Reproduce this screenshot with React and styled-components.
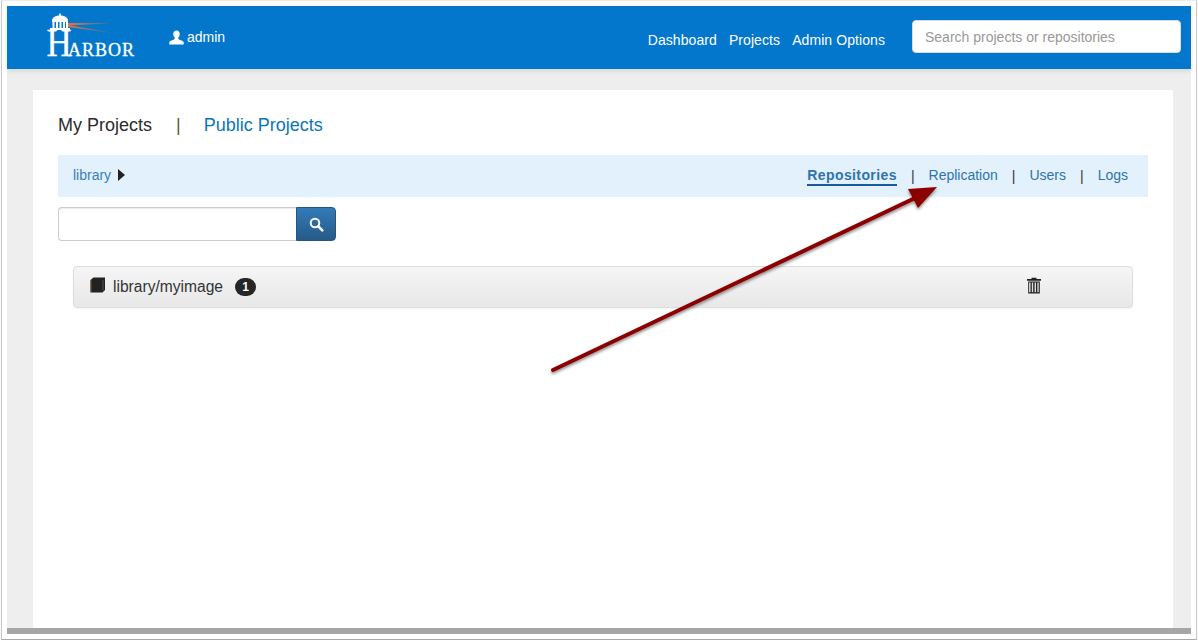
import React from "react"
import styled, { createGlobalStyle } from "styled-components"

const GlobalStyle = createGlobalStyle`
    html, body {
        margin: 0;
        padding: 0;
        background: #fff;
    }

    body {
        font-family: "Liberation Sans", Arial, sans-serif;
        font-size: 14px;
        overflow: hidden;
    }
`

const Frame = styled.div`
    box-sizing: border-box;
    position: relative;
    width: 1196px;
    height: 640px;
    margin-left: 1px;
    padding: 5px 5px 5px 5px;
    background: #fff;
    border: 1px solid #c9c9c9;
    border-top-color: #ececec;
    border-bottom-color: #a9a9a9;
    box-shadow: 0 1px 1px rgba(0, 0, 0, 0.15);
    display: flex;
    flex-direction: column;
`

const Header = styled.header`
    flex: 0 0 63px;
    display: flex;
    align-items: center;
    background: #0277cc;
    box-shadow: 0 2px 5px rgba(0, 0, 0, 0.1);
    position: relative;
    padding-right: 10px;
`

const LogoMark = styled.svg`
    display: block;
    width: 95px;
    height: 52px;
    margin-left: 38px;
    margin-top: 3px;
`

const UserName = styled.div`
    display: flex;
    align-items: center;
    gap: 3px;
    margin-left: 29px;
    margin-bottom: 1px;
    color: #fff;
    font-size: 14px;
`

const Nav = styled.nav`
    display: flex;
    gap: 12px;
    margin-left: auto;
    margin-right: 27px;
    padding-top: 5px;
`

const NavLink = styled.a`
    color: #fff;
    font-size: 14px;
    line-height: 20px;
    letter-spacing: 0.08px;
    text-decoration: none;
`

const GlobalSearch = styled.input`
    box-sizing: border-box;
    width: 269px;
    height: 33px;
    margin-top: -2px;
    padding: 0 12px;
    border: 1px solid #d5dde3;
    border-radius: 4px;
    background: #fff;
    font-family: inherit;
    font-size: 14px;

    &::placeholder {
        color: #999;
        opacity: 1;
    }
`

const Main = styled.main`
    flex: 1;
    min-height: 0;
    display: flex;
    padding: 21px 18px 0 26px;
    background: #eee;
`

const Card = styled.section`
    box-sizing: border-box;
    width: 1140px;
    padding: 0 25px;
    background: #fff;
`

const ProjectTabs = styled.div`
    display: flex;
    align-items: center;
    height: 59px;
    padding-top: 6px;
    font-size: 18px;
`

const ProjectTab = styled.a`
    color: ${props => (props.$active ? "#2b2b2b" : "#0b76b5")};
    text-decoration: none;
`

const TabDivider = styled.span`
    margin: 0 23px 0 24px;
    color: #4d5a4d;
`

const SubBar = styled.div`
    display: flex;
    align-items: center;
    justify-content: space-between;
    height: 42px;
    padding: 0 20px 0 15px;
    background: #e3f1fd;
`

const Crumb = styled.div`
    display: flex;
    align-items: center;
    gap: 7px;
    margin-bottom: 2px;
    color: #3d7fb8;
    font-size: 14px;
`

const Caret = styled.span`
    width: 0;
    height: 0;
    border-left: 7px solid #222;
    border-top: 6px solid transparent;
    border-bottom: 6px solid transparent;
`

const SubTabs = styled.div`
    display: flex;
    align-items: center;
`

const SubTab = styled.a`
    color: #2f73ad;
    font-size: 14px;
    line-height: 18px;
    text-decoration: none;
    font-weight: ${props => (props.$active ? "bold" : "normal")};
    border-bottom: 2px solid ${props => (props.$active ? "#1a5a9e" : "transparent")};
    letter-spacing: ${props => (props.$active ? "0.4px" : "0")};
`

const SubDivider = styled.span`
    margin: 0 14px;
    color: #333;
    font-size: 14px;
    line-height: 16px;
`

const SearchRow = styled.div`
    display: flex;
    margin-top: 10px;
    width: 278px;
    height: 34px;
`

const SearchField = styled.input`
    box-sizing: border-box;
    flex: 1;
    min-width: 0;
    border: 1px solid #ccc;
    border-right: 0;
    border-radius: 4px 0 0 4px;
    background: #fff;
    box-shadow: inset 0 1px 1px rgba(0, 0, 0, 0.075);
`

const SearchButton = styled.button`
    flex: 0 0 40px;
    display: flex;
    align-items: center;
    justify-content: center;
    padding: 0;
    border: 1px solid #245580;
    border-radius: 0 4px 4px 0;
    background: linear-gradient(to bottom, #337ab7, #265a88);
`

const RepoRow = styled.div`
    box-sizing: border-box;
    display: flex;
    align-items: center;
    height: 42px;
    margin: 25px 15px 0;
    padding: 0 90px 0 16px;
    border: 1px solid #ddd;
    border-radius: 4px;
    background: linear-gradient(to bottom, #f5f5f5, #e8e8e8);
    box-shadow: 0 1px 2px rgba(0, 0, 0, 0.05);
`

const RepoName = styled.span`
    margin-left: 8px;
    color: #333;
    font-size: 15.6px;
`

const Badge = styled.span`
    box-sizing: border-box;
    width: 21px;
    height: 18px;
    margin-left: 12px;
    border-radius: 10px;
    background: #262626;
    color: #fff;
    font-size: 12px;
    font-weight: bold;
    line-height: 18px;
    text-align: center;
`

const BookWrap = styled.span`
    display: flex;
    margin-bottom: 4px;
`

const TrashButton = styled.span`
    display: flex;
    margin-left: auto;
    margin-bottom: 4px;
`

const BottomBar = styled.div`
    flex: 0 0 6px;
    background: #a6a6a6;
`

const ArrowOverlay = styled.svg`
    position: absolute;
    left: -2px;
    top: -1px;
    width: 1198px;
    height: 642px;
    pointer-events: none;
`

const Logo = () => (
    <LogoMark viewBox="45 13 95 52">
        <defs>
            <linearGradient id="beam" x1="0" y1="0" x2="1" y2="0">
                <stop offset="0" stopColor="#e8743a" />
                <stop offset="1" stopColor="#e8743a" stopOpacity="0" />
            </linearGradient>
        </defs>
        <polygon points="68,23 120,23 68,25.5" fill="url(#beam)" />
        <polygon points="68,25 120,34 68,27" fill="url(#beam)" />
        <path d="M52 21 C52 17 56 15.5 60 15.5 C64 15.5 68 17 68 21 Z" fill="#fff" />
        <rect x="59.2" y="13.5" width="1.6" height="3" fill="#fff" />
        <path d="M52 21h16v1H52z" fill="#fff" />
        <path d="M52.500 22h2v6h-2zM56 22h2v6h-2zM59.500 22h2v6h-2zM63 22h2v6h-2zM66 22h2v6h-2z" fill="#fff" />
        <path d="M50 28h20v2H50z" fill="#fff" />
        <text
            transform="translate(46.500 55.500) scale(0.85 1)"
            fontFamily="'Liberation Serif', serif"
            fontSize="41"
            fill="#fff"
            stroke="#fff"
            strokeWidth="0.3"
        >
            H
        </text>
        <text
            x="68"
            y="55.500"
            fontFamily="'Liberation Serif', serif"
            fontSize="18"
            letterSpacing="1"
            fill="#fff"
            stroke="#fff"
            strokeWidth="0.3"
        >
            ARBOR
        </text>
    </LogoMark>
)

const UserIcon = () => (
    <svg width="15" height="15" viewBox="0 0 15 15">
        <path
            d="M7.500 0.500C5.500 0.500 4.300 2 4.300 4C4.300 5.700 5 7 5.800 7.800C5.900 8.700 5.600 9.300 4.500 9.800C2.800 10.500 0.500 11 0.300 12.500V14.500H14.700V12.500C14.500 11 12.200 10.500 10.500 9.800C9.400 9.300 9.100 8.700 9.200 7.800C10 7 10.700 5.700 10.700 4C10.700 2 9.500 0.500 7.500 0.500Z"
            fill="#fff"
        />
    </svg>
)

const SearchIcon = () => (
    <svg width="15" height="15" viewBox="0 0 15 15" fill="none">
        <circle cx="6" cy="6" r="4.300" stroke="#fff" strokeWidth="2" />
        <path d="M9.300 9.300L13.300 13.300" stroke="#fff" strokeWidth="2.600" strokeLinecap="round" />
    </svg>
)

const BookIcon = () => (
    <svg width="15" height="16" viewBox="0 0 15 16">
        <path d="M0.500 3L3.500 0.500H15V13L12.500 15.500H0.500Z" fill="#222" />
        <path d="M12.500 3H15V2.500L13.500 3.500V13L12.500 14Z" fill="#555" />
        <path d="M1 3.500V15" stroke="#7a5a38" strokeWidth="1" />
    </svg>
)

const TrashIcon = () => (
    <svg width="16" height="17" viewBox="0 0 16 17">
        <path d="M5.500 2V0.700H10.500V2H15V3.800H1V2Z" fill="#222" />
        <path d="M2.200 4.500H13.800V16.500H2.200Z" fill="#222" />
        <path d="M3.800 5.500V15.200" stroke="#dfe6ea" strokeWidth="1.400" />
        <path d="M6.500 5.500V15.200" stroke="#e0dcc8" strokeWidth="1.400" />
        <path d="M9.300 5.500V15.200" stroke="#d8dfe8" strokeWidth="1.400" />
        <path d="M12 5.500V15.200" stroke="#e0d8d0" strokeWidth="1.400" />
    </svg>
)

const Arrow = () => (
    <ArrowOverlay viewBox="0 0 1198 642">
        <defs>
            <filter id="arrowShadow" x="-5%" y="-10%" width="110%" height="120%">
                <feDropShadow dx="0" dy="2" stdDeviation="1.500" floodColor="#000" floodOpacity="0.45" />
            </filter>
        </defs>
        <g filter="url(#arrowShadow)" fill="#8b0000">
            <path d="M553 370L915 198" stroke="#8b0000" strokeWidth="4" strokeLinecap="round" />
            <polygon points="937,187 908,189 918,208" />
        </g>
    </ArrowOverlay>
)

const subTabs = ["Repositories", "Replication", "Users", "Logs"]

const App = () => (
    <>
        <GlobalStyle />
        <Frame>
            <Header>
                <Logo />
                <UserName>
                    <UserIcon />
                    admin
                </UserName>
                <Nav>
                    <NavLink>Dashboard</NavLink>
                    <NavLink>Projects</NavLink>
                    <NavLink>Admin Options</NavLink>
                </Nav>
                <GlobalSearch placeholder="Search projects or repositories" />
            </Header>
            <Main>
                <Card>
                    <ProjectTabs>
                        <ProjectTab $active>My Projects</ProjectTab>
                        <TabDivider>|</TabDivider>
                        <ProjectTab>Public Projects</ProjectTab>
                    </ProjectTabs>
                    <SubBar>
                        <Crumb>
                            library
                            <Caret />
                        </Crumb>
                        <SubTabs>
                            {subTabs.map((tab, i) => (
                                <React.Fragment key={tab}>
                                    {i > 0 && <SubDivider>|</SubDivider>}
                                    <SubTab $active={i === 0}>{tab}</SubTab>
                                </React.Fragment>
                            ))}
                        </SubTabs>
                    </SubBar>
                    <SearchRow>
                        <SearchField />
                        <SearchButton>
                            <SearchIcon />
                        </SearchButton>
                    </SearchRow>
                    <RepoRow>
                        <BookWrap>
                            <BookIcon />
                        </BookWrap>
                        <RepoName>library/myimage</RepoName>
                        <Badge>1</Badge>
                        <TrashButton>
                            <TrashIcon />
                        </TrashButton>
                    </RepoRow>
                </Card>
            </Main>
            <BottomBar />
            <Arrow />
        </Frame>
    </>
)

export default App
